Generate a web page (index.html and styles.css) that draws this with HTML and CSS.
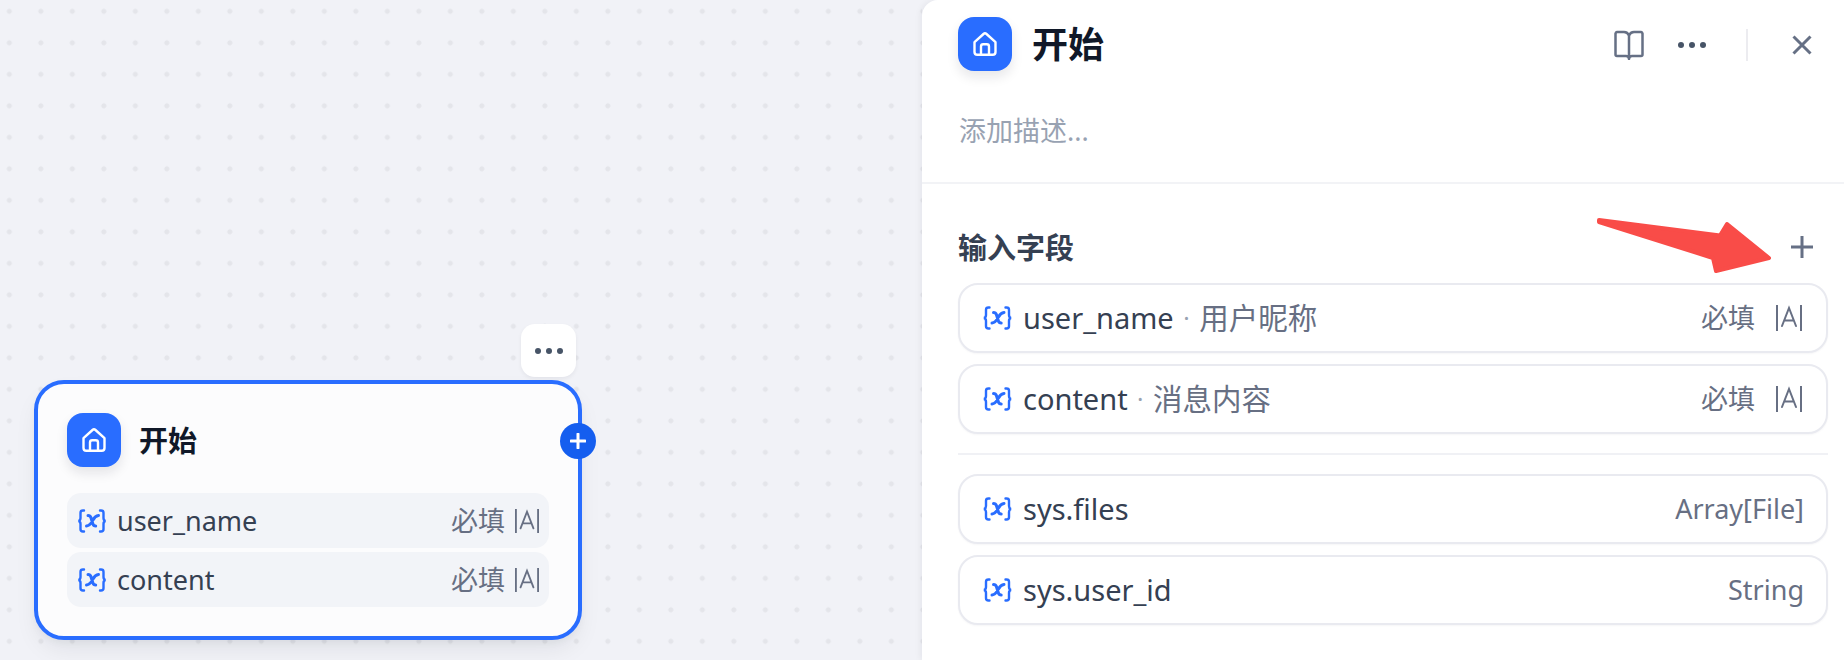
FILE: index.html
```html
<!DOCTYPE html>
<html lang="zh-CN">
<head>
    <meta charset="UTF-8">
    <title>开始节点</title>
    <link rel="stylesheet" href="styles.css">
</head>

<body>
    <svg class="defs" xmlns="http://www.w3.org/2000/svg">
        <symbol id="i-home" viewBox="0 0 24 24">
            <path d="M1.500 10.200 10.500 2a2.300 2.300 0 0 1 3 0l9 8.200V20a2.800 2.800 0 0 1-2.800 2.800H4.300A2.800 2.800 0 0 1 1.500 20Z" />
            <path d="M8 22.800V14.500a2.200 2.200 0 0 1 2.200-2.200h3.600a2.200 2.200 0 0 1 2.200 2.200v8.300" />
        </symbol>
        <symbol id="i-var" viewBox="0 0 29 24">
            <path d="M6.500 1.500H5.500C3.800 1.500 3 2.300 3 3.700V9c0 1.500-.8 2.700-2 3 1.200.3 2 1.500 2 3v5.300c0 1.400.8 2.200 2.500 2.200h1" />
            <path d="M22.500 1.500h1c1.700 0 2.500.8 2.500 2.200V9c0 1.500.8 2.700 2 3-1.200.3-2 1.500-2 3v5.300c0 1.400-.8 2.200-2.500 2.200h-1" />
            <path class="var-x" d="M10.500 6.500c1.500 0 2.400.6 2.900 2l2 6.500c.4 1.300 1.300 2 2.800 2M21 6.500c-2.300.2-3.900 1.500-5.500 4.500-1.500 2.800-3 5.700-6.500 6" />
        </symbol>
        <symbol id="i-type" viewBox="0 0 26 26">
            <path d="M1 0v26M25 0v26" />
            <path d="M6 21 13 3l7 18M8.400 15.500h9.200" />
        </symbol>
        <symbol id="i-book" viewBox="0 0 30 30">
            <path d="M15 5.500C14 3 12.500 2 10 2H3a2 2 0 0 0-1.500 1.500v21A1.500 1.500 0 0 0 3 26h9c1.600 0 3 1 3 3 0-2 1.400-3 3-3h9a1.500 1.500 0 0 0 1.500-1.500v-21A2 2 0 0 0 27 2h-7c-2.500 0-4 1-5 3.500Zm0 0V29" />
        </symbol>
    </svg>

    <main class="page">
        <!-- 画布 -->
        <section class="canvas">
            <button class="node-menu" type="button"><i></i><i></i><i></i></button>
            <div class="node">
                <div class="node-head">
                    <span class="block-icon"><svg class="home"><use href="#i-home" /></svg></span>
                    <h2 class="node-title">开始</h2>
                </div>
                <ul class="node-vars">
                    <li>
                        <svg class="var var-sm"><use href="#i-var" /></svg>
                        <span class="var-name">user_name</span>
                        <span class="var-meta">必填</span>
                        <svg class="type type-sm"><use href="#i-type" /></svg>
                    </li>
                    <li>
                        <svg class="var var-sm"><use href="#i-var" /></svg>
                        <span class="var-name">content</span>
                        <span class="var-meta">必填</span>
                        <svg class="type type-sm"><use href="#i-type" /></svg>
                    </li>
                </ul>
                <span class="node-add">
                    <svg viewBox="0 0 16 16"><path d="M8 1v14M1 8h14" /></svg>
                </span>
            </div>
        </section>

        <!-- 오른쪽 패널 -->
        <aside class="panel">
            <div class="panel-top">
                <div class="panel-head">
                    <span class="block-icon"><svg class="home"><use href="#i-home" /></svg></span>
                    <h1 class="panel-title">开始</h1>
                    <div class="panel-tools">
                        <svg class="book"><use href="#i-book" /></svg>
                        <span class="dots"><i></i><i></i><i></i></span>
                        <span class="tool-line"></span>
                        <svg class="close" viewBox="0 0 20 20"><path d="M1.500 1.500l17 17M18.500 1.500l-17 17" /></svg>
                    </div>
                </div>
                <p class="panel-desc">添加描述...</p>
            </div>

            <div class="fields">
                <div class="fields-head">
                    <h3>输入字段</h3>
                    <svg class="add" viewBox="0 0 22 22"><path d="M11 0v22M0 11h22" /></svg>
                </div>
                <ul class="field-list">
                    <li class="field">
                        <svg class="var"><use href="#i-var" /></svg>
                        <span class="var-name">user_name</span>
                        <span class="sep">·</span>
                        <span class="var-label">用户昵称</span>
                        <span class="var-meta">必填</span>
                        <svg class="type"><use href="#i-type" /></svg>
                    </li>
                    <li class="field">
                        <svg class="var"><use href="#i-var" /></svg>
                        <span class="var-name">content</span>
                        <span class="sep">·</span>
                        <span class="var-label">消息内容</span>
                        <span class="var-meta">必填</span>
                        <svg class="type"><use href="#i-type" /></svg>
                    </li>
                </ul>
                <hr class="fields-line">
                <ul class="field-list">
                    <li class="field">
                        <svg class="var"><use href="#i-var" /></svg>
                        <span class="var-name">sys.files</span>
                        <span class="var-meta plain">Array[File]</span>
                    </li>
                    <li class="field">
                        <svg class="var"><use href="#i-var" /></svg>
                        <span class="var-name">sys.user_id</span>
                        <span class="var-meta plain">String</span>
                    </li>
                </ul>
            </div>

            <!-- 截图上的红色标注箭头 -->
            <svg class="arrow" viewBox="0 0 176 60">
                <path d="M2 3 123 18.500 130 7 172 41 119 54 116 41 2 5Z" />
            </svg>
        </aside>
    </main>
</body></html>
```

FILE: styles.css
```css
html,
body {
    margin: 0;
    padding: 0;
}

body {
    width: 1844px;
    height: 660px;
    overflow: hidden;
    font-family: "Noto Sans", "Noto Sans CJK SC", sans-serif;
    background-color: #f1f2f7;
}

ul {
    margin: 0;
    padding: 0;
    list-style: none;
}

h1,
h2,
h3,
p {
    margin: 0;
}

svg {
    display: block;
    flex: none;
}

.defs {
    display: none;
}

.page {
    display: flex;
    height: 660px;
}

/* canvas */
.canvas {
    position: relative;
    width: 922px;
    flex: none;
    background-image: radial-gradient(circle, #e4e5ea 2.2px, transparent 2.9px);
    background-size: 31.5px 31.5px;
    background-position: -6.45px -4.45px;
}

.node {
    position: absolute;
    left: 34px;
    top: 380px;
    box-sizing: border-box;
    width: 548px;
    height: 260px;
    padding: 29px 29px 0 29px;
    border: 4px solid #296dff;
    border-radius: 30px;
    background-color: #fcfcfd;
    box-shadow: 0 12px 24px -4px rgba(16, 24, 40, .08), 0 4px 8px -2px rgba(16, 24, 40, .05);
}

.node-menu {
    position: absolute;
    left: 521px;
    top: 324px;
    display: flex;
    align-items: center;
    justify-content: center;
    gap: 5px;
    width: 55px;
    height: 53px;
    padding: 0;
    border: 0;
    border-radius: 14px;
    background-color: #fff;
    box-shadow: 0 2px 4px rgba(16, 24, 40, .06);
}

.node-menu i,
.dots i {
    display: block;
    width: 6px;
    height: 6px;
    border-radius: 50%;
    background-color: #475467;
}

.node-head {
    display: flex;
    align-items: center;
    gap: 18px;
    margin-bottom: 26px;
}

.block-icon {
    display: flex;
    align-items: center;
    justify-content: center;
    flex: none;
    width: 54px;
    height: 54px;
    border-radius: 16px;
    background-color: #296dff;
    box-shadow: 0 6px 12px rgba(16, 24, 40, .1);
}

.home {
    width: 24px;
    height: 24px;
    fill: none;
    stroke: #fff;
    stroke-width: 2.400;
    stroke-linejoin: round;
}

.node-title {
    padding-top: 2px;
    font-size: 29px;
    line-height: 40px;
    font-weight: 700;
    color: #101828;
}

.node-vars {
    display: flex;
    flex-direction: column;
    gap: 4px;
}

.node-vars li {
    display: flex;
    align-items: center;
    height: 55px;
    padding: 0 10px;
    border-radius: 14px;
    background-color: #f2f4f8;
}

.node-vars .var-name {
    margin-left: 10px;
    font-size: 27px;
}

.node-add {
    position: absolute;
    right: -18px;
    top: 39px;
    display: flex;
    align-items: center;
    justify-content: center;
    width: 36px;
    height: 36px;
    border-radius: 50%;
    background-color: #155eef;
}

.node-add svg {
    width: 16px;
    height: 16px;
    fill: none;
    stroke: #fff;
    stroke-width: 3;
    stroke-linecap: round;
}

/* shared row parts */
.var {
    width: 29px;
    height: 24px;
    fill: none;
    stroke: #296dff;
    stroke-width: 2.400;
    stroke-linecap: round;
}

.var-sm {
    width: 30px;
}

.var-x {
    stroke-width: 3;
}

.var-name {
    margin-left: 11px;
    font-size: 29px;
    line-height: 40px;
    color: #354052;
}

.var-label {
    font-size: 29.500px;
    line-height: 40px;
    color: #676f83;
}

.sep {
    margin: 0 9.500px;
    font-size: 24px;
    line-height: 40px;
    color: #98a2b2;
}

.var-meta {
    margin-left: auto;
    font-size: 27px;
    line-height: 40px;
    color: #676f83;
}

.plain {
    margin-right: -2px;
}

.type {
    width: 26px;
    height: 26px;
    margin-left: 21px;
    fill: none;
    stroke: #676f83;
    stroke-width: 2;
    stroke-linecap: round;
}

.type-sm {
    width: 24px;
    height: 24px;
    margin-left: 10px;
}

/* panel */
.panel {
    position: relative;
    flex: 1;
    border-top-left-radius: 16px;
    background-color: #fff;
    box-shadow: -2px 0 6px rgba(16, 24, 40, .05);
}

.panel-top {
    height: 184px;
    padding: 17px 32px 0 36px;
    box-sizing: border-box;
    border-bottom: 2px solid #f2f3f6;
}

.panel-head {
    display: flex;
    align-items: center;
}

.panel-title {
    margin-left: 20px;
    padding-top: 2px;
    font-size: 36px;
    line-height: 52px;
    font-weight: 700;
    color: #101828;
}

.panel-tools {
    display: flex;
    align-items: center;
    margin-left: auto;
    margin-top: 2px;
}

.book {
    width: 30px;
    height: 30px;
    fill: none;
    stroke: #667085;
    stroke-width: 2.500;
    stroke-linejoin: round;
}

.dots {
    display: flex;
    gap: 5px;
    margin-left: 34px;
}

.tool-line {
    width: 2px;
    height: 32px;
    margin-left: 40px;
    background-color: #ececf0;
}

.close {
    width: 20px;
    height: 20px;
    margin-left: 44px;
    fill: none;
    stroke: #667085;
    stroke-width: 3;
}

.panel-desc {
    margin-top: 40px;
    margin-left: 1px;
    font-size: 27px;
    line-height: 40px;
    color: #98a2b2;
}

.fields {
    padding: 0 16px 0 36px;
}

.fields-head {
    display: flex;
    align-items: center;
    justify-content: space-between;
    height: 99px;
    padding-top: 29px;
    box-sizing: border-box;
    padding-right: 15px;
}

.fields-head h3 {
    font-size: 29px;
    line-height: 40px;
    font-weight: 700;
    color: #354052;
}

.add {
    width: 22px;
    height: 22px;
    margin-top: -2px;
    fill: none;
    stroke: #667085;
    stroke-width: 3;
}

.field-list {
    display: flex;
    flex-direction: column;
    gap: 11px;
}

.field {
    display: flex;
    align-items: center;
    box-sizing: border-box;
    height: 70px;
    padding: 0 24px 0 23px;
    border: 2px solid #e9eaf0;
    border-radius: 20px;
    background-color: #fff;
    box-shadow: 0 1px 2px rgba(16, 24, 40, .04);
}

.fields-line {
    height: 2px;
    margin: 19px 0;
    border: 0;
    background-color: #f0f1f5;
}

.arrow {
    position: absolute;
    left: 675px;
    top: 217px;
    width: 176px;
    height: 60px;
    fill: #f94c48;
    stroke: #f94c48;
    stroke-width: 4;
    stroke-linejoin: round;
}
```
